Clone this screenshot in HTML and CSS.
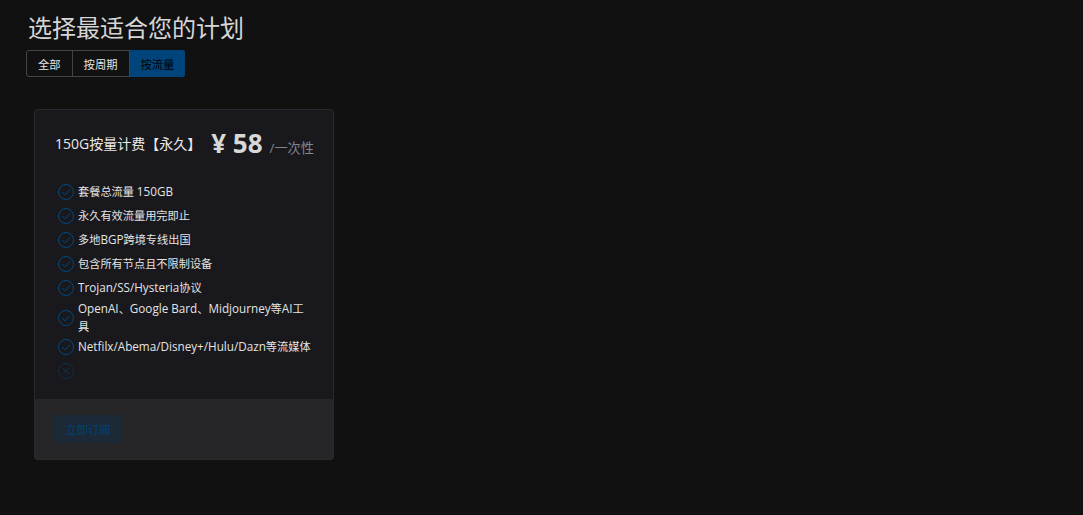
FILE: index.html
```html
<!DOCTYPE html>
<html lang="zh">
<head>
    <meta charset="utf-8">
    <title>选择最适合您的计划</title>
    <link rel="stylesheet" href="styles.css">
</head>
<body>
    <h1 class="page-title">选择最适合您的计划</h1>

    <div class="tabs">
        <span class="tab">全部</span>
        <span class="tab">按周期</span>
        <span class="tab tab-active">按流量</span>
    </div>

    <div class="plan-card">
        <div class="plan-body">
            <div class="plan-head">
                <span class="plan-name">150G按量计费【永久】</span>
                <span class="plan-price">¥ 58</span>
                <span class="plan-unit">/一次性</span>
            </div>

            <ul class="feature-list">
                <li class="feature">
                    <svg class="feature-icon" viewBox="0 0 16 16"><circle cx="8" cy="8" r="7.5"/><path d="M4.2 8.2l2.7 2.7 4.9-5.2"/></svg>
                    <span>套餐总流量 <span class="latin">150GB</span></span>
                </li>
                <li class="feature">
                    <svg class="feature-icon" viewBox="0 0 16 16"><circle cx="8" cy="8" r="7.5"/><path d="M4.2 8.2l2.7 2.7 4.9-5.2"/></svg>
                    <span>永久有效流量用完即止</span>
                </li>
                <li class="feature">
                    <svg class="feature-icon" viewBox="0 0 16 16"><circle cx="8" cy="8" r="7.5"/><path d="M4.2 8.2l2.7 2.7 4.9-5.2"/></svg>
                    <span>多地<span class="latin">BGP</span>跨境专线出国</span>
                </li>
                <li class="feature">
                    <svg class="feature-icon" viewBox="0 0 16 16"><circle cx="8" cy="8" r="7.5"/><path d="M4.2 8.2l2.7 2.7 4.9-5.2"/></svg>
                    <span>包含所有节点且不限制设备</span>
                </li>
                <li class="feature">
                    <svg class="feature-icon" viewBox="0 0 16 16"><circle cx="8" cy="8" r="7.5"/><path d="M4.2 8.2l2.7 2.7 4.9-5.2"/></svg>
                    <span><span class="latin">Trojan/SS/Hysteria</span>协议</span>
                </li>
                <li class="feature">
                    <svg class="feature-icon" viewBox="0 0 16 16"><circle cx="8" cy="8" r="7.5"/><path d="M4.2 8.2l2.7 2.7 4.9-5.2"/></svg>
                    <span><span class="latin">OpenAI</span>、<span class="latin">Google Bard</span>、<span class="latin">Midjourney</span>等<span class="latin">AI</span>工<br>具</span>
                </li>
                <li class="feature">
                    <svg class="feature-icon" viewBox="0 0 16 16"><circle cx="8" cy="8" r="7.5"/><path d="M4.2 8.2l2.7 2.7 4.9-5.2"/></svg>
                    <span><span class="latin">Netfilx/Abema/Disney+/Hulu/Dazn</span>等流媒体</span>
                </li>
                <li class="feature feature-off">
                    <svg class="feature-icon" viewBox="0 0 16 16"><circle cx="8" cy="8" r="7.5"/><path d="M4.8 4.8l6.4 6.4M11.2 4.8l-6.4 6.4"/></svg>
                </li>
            </ul>
        </div>

        <div class="plan-foot">
            <button class="buy-btn">立即订阅</button>
        </div>
    </div>
</body>
</html>
```

FILE: styles.css
```css
html, body {
    height: 100%;
    margin: 0;
    padding: 0;
}

body {
    background: #111112;
    color: #e0e0e0;
    font-family: "Open Sans", "Noto Sans CJK SC", sans-serif;
    font-size: 11.2px;
    padding: 12px 26px 0;
    box-sizing: border-box;
    overflow: hidden;
}

.page-title {
    margin: 0 0 6px 2px;
    font-size: 24px;
    font-weight: 400;
    line-height: 32px;
    color: #d6d6d6;
}

.tabs {
    display: inline-flex;
    height: 27px;
    box-sizing: border-box;
    border: 1px solid #444446;
    border-radius: 3px;
    vertical-align: top;
    font-size: 11.3px;
}

.tab {
    display: flex;
    align-items: center;
    padding: 0 11px;
    color: #e4e4e4;
    border-right: 1px solid #444446;
}

.tab:last-child {
    border-right: 0;
}

.tab-active {
    margin: -1px -1px -1px 0;
    background: #00447c;
    color: #000;
    border-radius: 0 3px 3px 0;
}

.plan-card {
    width: 300px;
    margin: 32px 0 0 8px;
    box-sizing: border-box;
    background: #18181d;
    border: 1px solid #2a2a2d;
    border-radius: 3px;
}

.plan-body {
    padding: 18px 20px 16px;
}

.plan-head {
    display: flex;
    align-items: center;
    height: 30px;
    margin-bottom: 22px;
    white-space: nowrap;
}

.plan-name {
    font-size: 14px;
    color: #e8e8e8;
}

.plan-price {
    margin-left: 10px;
    font-size: 26px;
    font-weight: 700;
    color: #d8d8d8;
}

.plan-unit {
    margin-left: 7px;
    padding-top: 8px;
    font-size: 13.2px;
    color: #85858c;
}

.feature-list {
    list-style: none;
    margin: 0;
    padding: 0 0 0 3px;
}

.feature {
    display: flex;
    align-items: center;
    gap: 4px;
    min-height: 24px;
    line-height: 17.5px;
    color: #e4e4e4;
}

.latin {
    font-size: 11.7px;
}

.feature-icon {
    flex: none;
    width: 16px;
    height: 16px;
    fill: none;
    stroke: #004a80;
    stroke-width: 1;
}

.feature-off .feature-icon {
    stroke: #0f3048;
}

.plan-foot {
    height: 60px;
    padding: 16px 19px;
    box-sizing: border-box;
    background: #262628;
}

.buy-btn {
    display: block;
    width: 68px;
    height: 28px;
    padding: 0;
    border: 0;
    border-radius: 3px;
    background: #1b2a36;
    color: #00427a;
    font-family: inherit;
    font-size: 11.2px;
}
```
